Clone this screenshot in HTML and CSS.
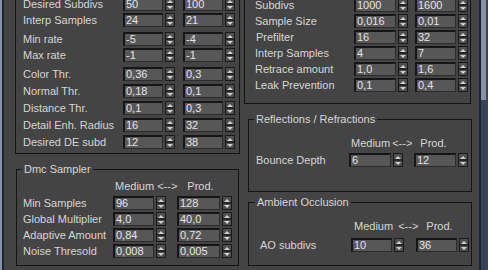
FILE: index.html
```html
<!DOCTYPE html>
<html lang="en">
<head>
    <meta charset="UTF-8">
    <meta name="viewport" content="width=device-width, initial-scale=1.0">
    <title>Render Settings</title>
    <link rel="stylesheet" href="styles.css">
</head>
<body>

<div class="panel">
    <div class="edge-left"></div>

    <!-- Left column -->
    <div class="column column-left">
        <div class="group group-gi">
            <div class="rows tight">
                <div class="row"><span class="label">Desired Subdivs</span>
                    <div class="spin"><span class="field">50</span><span class="arrows"></span></div>
                    <div class="spin"><span class="field">100</span><span class="arrows"></span></div>
                </div>
                <div class="row"><span class="label">Interp Samples</span>
                    <div class="spin"><span class="field">24</span><span class="arrows"></span></div>
                    <div class="spin"><span class="field">21</span><span class="arrows"></span></div>
                </div>
            </div>
            <div class="rows tight">
                <div class="row"><span class="label">Min rate</span>
                    <div class="spin"><span class="field">-5</span><span class="arrows"></span></div>
                    <div class="spin"><span class="field">-4</span><span class="arrows"></span></div>
                </div>
                <div class="row"><span class="label">Max rate</span>
                    <div class="spin"><span class="field">-1</span><span class="arrows"></span></div>
                    <div class="spin"><span class="field">-1</span><span class="arrows"></span></div>
                </div>
            </div>
            <div class="rows">
                <div class="row"><span class="label">Color Thr.</span>
                    <div class="spin"><span class="field">0,36</span><span class="arrows"></span></div>
                    <div class="spin"><span class="field">0,3</span><span class="arrows"></span></div>
                </div>
                <div class="row"><span class="label">Normal Thr.</span>
                    <div class="spin"><span class="field">0,18</span><span class="arrows"></span></div>
                    <div class="spin"><span class="field">0,1</span><span class="arrows"></span></div>
                </div>
                <div class="row"><span class="label">Distance Thr.</span>
                    <div class="spin"><span class="field">0,1</span><span class="arrows"></span></div>
                    <div class="spin"><span class="field">0,3</span><span class="arrows"></span></div>
                </div>
                <div class="row"><span class="label">Detail Enh. Radius</span>
                    <div class="spin"><span class="field">16</span><span class="arrows"></span></div>
                    <div class="spin"><span class="field">32</span><span class="arrows"></span></div>
                </div>
                <div class="row"><span class="label">Desired DE subd</span>
                    <div class="spin"><span class="field">12</span><span class="arrows"></span></div>
                    <div class="spin"><span class="field">38</span><span class="arrows"></span></div>
                </div>
            </div>
        </div>

        <fieldset class="group group-dmc">
            <legend>Dmc Sampler</legend>
            <div class="head"><span>Medium</span><span class="swap">&lt;--&gt;</span><span class="prod">Prod.</span></div>
            <div class="rows tight">
                <div class="row"><span class="label">Min Samples</span>
                    <div class="spin"><span class="field">96</span><span class="arrows"></span></div>
                    <div class="spin"><span class="field">128</span><span class="arrows"></span></div>
                </div>
                <div class="row"><span class="label">Global Multiplier</span>
                    <div class="spin"><span class="field">4,0</span><span class="arrows"></span></div>
                    <div class="spin"><span class="field">40,0</span><span class="arrows"></span></div>
                </div>
                <div class="row"><span class="label">Adaptive Amount</span>
                    <div class="spin"><span class="field">0,84</span><span class="arrows"></span></div>
                    <div class="spin"><span class="field">0,72</span><span class="arrows"></span></div>
                </div>
                <div class="row"><span class="label">Noise Thresold</span>
                    <div class="spin"><span class="field">0,008</span><span class="arrows"></span></div>
                    <div class="spin"><span class="field">0,005</span><span class="arrows"></span></div>
                </div>
            </div>
        </fieldset>
    </div>

    <!-- Right column -->
    <div class="column column-right">
        <div class="group group-sss">
            <div class="rows tight">
                <div class="row"><span class="label">Subdivs</span>
                    <div class="spin"><span class="field">1000</span><span class="arrows"></span></div>
                    <div class="spin"><span class="field">1600</span><span class="arrows"></span></div>
                </div>
                <div class="row"><span class="label">Sample Size</span>
                    <div class="spin"><span class="field">0,016</span><span class="arrows"></span></div>
                    <div class="spin"><span class="field">0,01</span><span class="arrows"></span></div>
                </div>
                <div class="row"><span class="label indent">Prefilter</span>
                    <div class="spin"><span class="field">16</span><span class="arrows"></span></div>
                    <div class="spin"><span class="field">32</span><span class="arrows"></span></div>
                </div>
                <div class="row"><span class="label">Interp Samples</span>
                    <div class="spin"><span class="field">4</span><span class="arrows"></span></div>
                    <div class="spin"><span class="field">7</span><span class="arrows"></span></div>
                </div>
                <div class="row"><span class="label">Retrace amount</span>
                    <div class="spin"><span class="field">1,0</span><span class="arrows"></span></div>
                    <div class="spin"><span class="field">1,6</span><span class="arrows"></span></div>
                </div>
                <div class="row"><span class="label">Leak Prevention</span>
                    <div class="spin"><span class="field">0,1</span><span class="arrows"></span></div>
                    <div class="spin"><span class="field">0,4</span><span class="arrows"></span></div>
                </div>
            </div>
        </div>

        <fieldset class="group group-refl">
            <legend>Reflections / Refractions</legend>
            <div class="head"><span>Medium</span><span class="swap">&lt;--&gt;</span><span class="prod">Prod.</span></div>
            <div class="row"><span class="label">Bounce Depth</span>
                <div class="spin"><span class="field">6</span><span class="arrows"></span></div>
                <div class="spin"><span class="field">12</span><span class="arrows"></span></div>
            </div>
        </fieldset>

        <fieldset class="group group-ao">
            <legend>Ambient Occlusion</legend>
            <div class="head"><span>Medium</span><span class="swap">&lt;--&gt;</span><span class="prod">Prod.</span></div>
            <div class="row"><span class="label">AO subdivs</span>
                <div class="spin"><span class="field">10</span><span class="arrows"></span></div>
                <div class="spin"><span class="field">36</span><span class="arrows"></span></div>
            </div>
        </fieldset>
    </div>

    <div class="edge-right"></div>
</div>

</body>
</html>
```

FILE: styles.css
```css
* {
    margin: 0;
    padding: 0;
    box-sizing: border-box;
}

body {
    background-color: #444444;
    font-family: 'Liberation Sans', Arial, sans-serif;
    font-size: 11px;
    line-height: 13px;
    color: #d6d6d6;
    overflow: hidden;
}

.panel {
    display: flex;
    height: 270px;
    overflow: hidden;
}

/* window frame strips */
.edge-left {
    width: 4px;
    background: linear-gradient(to right, #8693a7 0 2px, #1c2534 2px 4px);
}

.edge-right {
    flex: 1;
    background: linear-gradient(to right, #444 0 7px, #1c2534 7px 9px, transparent 9px 14px, #444 14px);
    position: relative;
}

.edge-right::before {
    content: '';
    position: absolute;
    left: 9px;
    width: 5px;
    top: 0;
    height: 100px;
    background-color: #8693a7;
}

.edge-right::after {
    content: '';
    position: absolute;
    left: 9px;
    width: 5px;
    top: 100px;
    bottom: 0;
    background-color: #34425a;
}

.column {
    display: flex;
    flex-direction: column;
}

.column-left {
    margin-left: 11px;
    width: 225px;
}

.column-right {
    margin-left: 4px;
    width: 228px;
}

/* group boxes */
.group {
    border: 1px solid #141414;
    min-width: 0;
}

legend {
    padding: 0 2px;
    line-height: 13px;
}

.rows {
    display: flex;
    flex-direction: column;
    gap: 3px;
}

.rows.tight {
    gap: 2px;
}

.row {
    display: flex;
    align-items: center;
    height: 14px;
}

.label {
    white-space: nowrap;
}

.label.indent {
    padding-left: 1px;
}

.head {
    display: flex;
    height: 13px;
}

/* spinner control */
.spin {
    display: flex;
    height: 14px;
}

.field {
    height: 14px;
    background-color: #575757;
    border-top: 2px solid #161616;
    border-left: 2px solid #161616;
    border-right: 1px solid #2c2c2c;
    border-bottom: 1px solid #2c2c2c;
    color: #e4e4e4;
    padding-left: 1px;
    line-height: 11px;
    overflow: hidden;
}

.arrows {
    width: 10px;
    height: 14px;
    margin-left: 2px;
    border: 1px solid #1a1a1a;
    background: linear-gradient(#4f4f4f 0 5px, #262626 5px 7px, #4f4f4f 7px);
    display: flex;
    flex-direction: column;
    justify-content: space-between;
    align-items: center;
    padding: 2px 0 1px;
}

.arrows::before {
    content: '';
    border-left: 3px solid transparent;
    border-right: 3px solid transparent;
    border-bottom: 3px solid #cfcfcf;
}

.arrows::after {
    content: '';
    border-left: 3px solid transparent;
    border-right: 3px solid transparent;
    border-top: 3px solid #cfcfcf;
}

/* GI settings (top left) */
.group-gi {
    margin-top: -20px;
    padding: 16px 0 4px 7px;
    width: 225px;
}

.group-gi .rows + .rows {
    margin-top: 5px;
}

.group-gi .rows:last-child {
    margin-top: 5px;
}

.group-gi .label { width: 100px; }
.group-gi .field { width: 40px; }
.group-gi .spin + .spin { margin-left: 8px; }

/* Dmc sampler */
.group-dmc {
    margin: 9px 0 0 1px;
    width: 223px;
    padding: 4px 0 7px 6px;
}

.group-dmc legend { margin-left: -1px; }
.group-dmc .head { padding-left: 92px; margin-bottom: 3px; }
.group-dmc .swap { margin-left: 3px; }
.group-dmc .prod { margin-left: 10px; }
.group-dmc .label { width: 90px; }
.group-dmc .spin .field { width: 41px; }
.group-dmc .spin + .spin { margin-left: 11px; }
.group-dmc .spin + .spin .field { width: 43px; }

/* SSS settings (top right) */
.group-sss {
    margin-top: -20px;
    padding: 17px 0 11px 10px;
    width: 227px;
}

.group-sss .label { width: 99px; }
.group-sss .spin .field { width: 42px; }
.group-sss .spin + .spin { margin-left: 7px; }
.group-sss .spin + .spin .field { width: 41px; }

/* Reflections / Refractions */
.group-refl {
    margin: 9px 0 0 4px;
    width: 224px;
    padding: 11px 0 24px 7px;
}

.group-refl legend { margin-left: -2px; }
.group-refl .head { padding-left: 95px; margin-bottom: 3px; }
.group-refl .swap { margin-left: 2px; }
.group-refl .prod { margin-left: 8px; }
.group-refl .label { width: 93px; }
.group-refl .field { width: 42px; }
.group-refl .spin + .spin { margin-left: 11px; }

/* Ambient occlusion */
.group-ao {
    margin: 4px 0 0 4px;
    width: 224px;
    padding: 11px 0 13px 11px;
}

.group-ao legend { margin-left: -5px; }
.group-ao .head { padding-left: 94px; margin-bottom: 5px; }
.group-ao .swap { margin-left: 5px; }
.group-ao .prod { margin-left: 8px; }
.group-ao .label { width: 91px; }
.group-ao .field { width: 41px; }
.group-ao .spin + .spin { margin-left: 12px; }
```
